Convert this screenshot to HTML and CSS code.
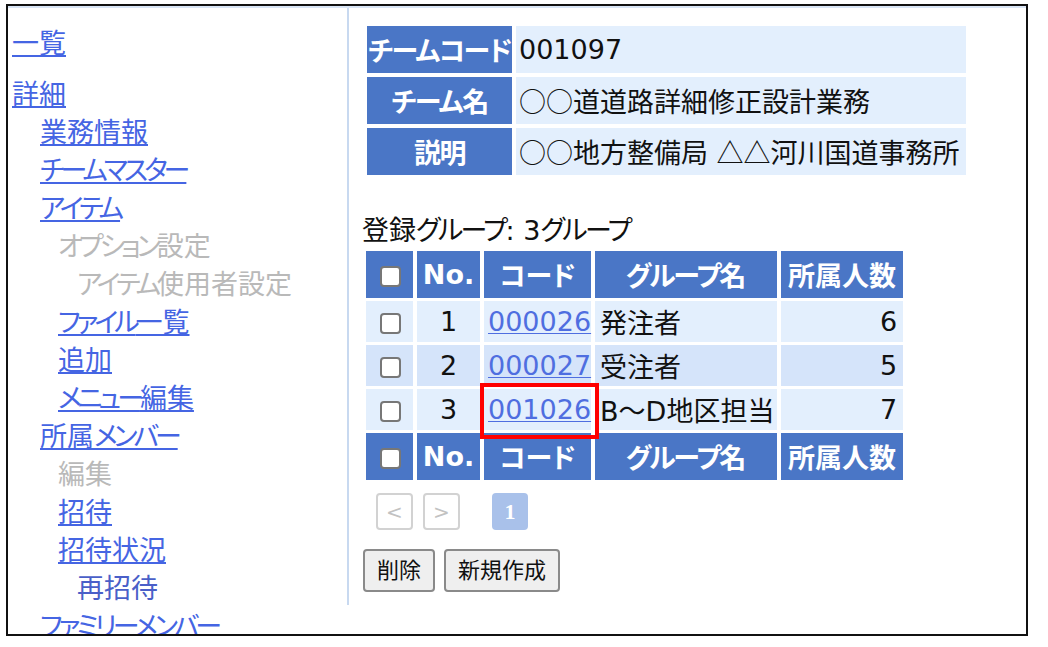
FILE: index.html
```html
<!DOCTYPE html>
<html lang="ja">
<head>
<meta charset="utf-8">
<title>チーム詳細</title>
<link rel="stylesheet" href="styles.css">
</head>
<body>
<div class="frame">
  <div class="inner">
    <nav class="sidebar">
      <div class="nav l0 first"><a href="#">一覧</a></div>
      <div class="nav l0"><a href="#">詳細</a></div>
      <div class="nav l1"><a href="#">業務情報</a></div>
      <div class="nav l1"><a href="#"><span class="kana">チームマスター</span></a></div>
      <div class="nav l1"><a href="#"><span class="kana">アイテム</span></a></div>
      <div class="nav l2 off"><span class="kana">オプション</span>設定</div>
      <div class="nav l3 off"><span class="kana">アイテム</span>使用者設定</div>
      <div class="nav l2"><a href="#"><span class="kana">ファイル</span>一覧</a></div>
      <div class="nav l2"><a href="#">追加</a></div>
      <div class="nav l2"><a href="#"><span class="kana">メニュー</span>編集</a></div>
      <div class="nav l1"><a href="#">所属<span class="kana">メンバー</span></a></div>
      <div class="nav l2 off">編集</div>
      <div class="nav l2"><a href="#">招待</a></div>
      <div class="nav l2"><a href="#">招待状況</a></div>
      <div class="nav l3 plain">再招待</div>
      <div class="nav l1"><a href="#"><span class="kana">ファミリーメンバー</span></a></div>
    </nav>
    <main class="main">
      <table class="info">
        <tr><th class="info-label">チームコード</th><td class="info-value">001097</td></tr>
        <tr><th class="info-label">チーム名</th><td class="info-value"><span class="sym">○○</span>道道路詳細修正設計業務</td></tr>
        <tr><th class="info-label">説明</th><td class="info-value"><span class="sym">○○</span>地方整備局 <span class="sym">△△</span>河川国道事務所</td></tr>
      </table>

      <div class="count">登録<span class="kana-s">グループ</span>: 3<span class="kana-s">グループ</span></div>

      <table class="groups">
        <tr class="head">
          <th class="c-cb"><span class="cb"></span></th>
          <th class="c-no">No.</th>
          <th class="c-code">コード</th>
          <th class="c-name"><span class="kana-h">グループ</span>名</th>
          <th class="c-num">所属人数</th>
        </tr>
        <tr class="odd">
          <td class="c-cb"><span class="cb"></span></td>
          <td class="c-no">1</td>
          <td class="c-code"><a href="#">000026</a></td>
          <td class="c-name">発注者</td>
          <td class="c-num">6</td>
        </tr>
        <tr class="even">
          <td class="c-cb"><span class="cb"></span></td>
          <td class="c-no">2</td>
          <td class="c-code"><a href="#">000027</a></td>
          <td class="c-name">受注者</td>
          <td class="c-num">5</td>
        </tr>
        <tr class="odd">
          <td class="c-cb"><span class="cb"></span></td>
          <td class="c-no">3</td>
          <td class="c-code marked"><a href="#">001026</a><span class="highlight"></span></td>
          <td class="c-name">B～D地区担当</td>
          <td class="c-num">7</td>
        </tr>
        <tr class="head">
          <th class="c-cb"><span class="cb"></span></th>
          <th class="c-no">No.</th>
          <th class="c-code">コード</th>
          <th class="c-name"><span class="kana-h">グループ</span>名</th>
          <th class="c-num">所属人数</th>
        </tr>
      </table>

      <div class="pager">
        <span class="pg-btn">&lt;</span>
        <span class="pg-btn">&gt;</span>
        <span class="pg-cur">1</span>
      </div>

      <div class="actions">
        <button class="btn" type="button">削除</button>
        <button class="btn" type="button">新規作成</button>
      </div>
    </main>
  </div>
</div>
</body>
</html>
```

FILE: styles.css
```css
html, body {
  margin: 0;
  padding: 0;
  background: #fff;
}

body {
  font-family: "DejaVu Sans", "Noto Sans CJK JP", sans-serif;
  font-size: 27px;
  color: #111;
  font-feature-settings: "palt";
}

.frame {
  margin: 4px 0 0 6px;
  width: 1018px;
  height: 628px;
  border: 2px solid #111;
  overflow: hidden;
}

.inner {
  border-top: 2px solid #d9e5f5;
  display: flex;
  align-items: flex-start;
}

/* sidebar */
.sidebar {
  width: 339px;
  flex: none;
  padding-top: 17px;
}

.nav {
  line-height: 38px;
  height: 38px;
  white-space: nowrap;
}

.nav.first {
  margin-bottom: 13px;
}

.nav a {
  color: #4565e3;
  text-decoration: underline;
  text-decoration-thickness: 2px;
  text-underline-offset: 2px;
}

.kana {
  letter-spacing: -4px;
}

.kana-s {
  letter-spacing: -2.5px;
}

.kana-h {
  letter-spacing: -2px;
}

.l0 { padding-left: 4px; }
.l1 { padding-left: 32px; }
.l2 { padding-left: 50px; }
.l3 { padding-left: 69px; }

.off { color: #b9b9b9; }
.plain { color: #4a5fc8; }

/* main */
.main {
  flex: none;
  border-left: 2px solid #c8d9f0;
  padding: 14px 0 13px 13px;
  width: 640px;
}

.info {
  border-collapse: separate;
  border-spacing: 4px;
  margin-left: 1px;
}

.info-label {
  width: 145px;
  height: 47px;
  padding: 0;
  background: #4a76c6;
  color: #fff;
  font-weight: bold;
  text-align: center;
  white-space: nowrap;
  letter-spacing: -1.5px;
}

.info-value {
  width: 447px;
  height: 47px;
  padding: 0 0 0 3px;
  background: #e3effd;
  white-space: nowrap;
}

.sym {
  font-family: "Noto Sans CJK JP", sans-serif;
  font-feature-settings: normal;
}

.count {
  margin-top: 35px;
  line-height: 34px;
  height: 34px;
  white-space: nowrap;
}

.groups {
  border-collapse: separate;
  border-spacing: 4px 3px;
}

.groups th, .groups td {
  padding: 0;
  white-space: nowrap;
}

.groups .head th {
  height: 47px;
  background: #4a76c6;
  color: #fff;
  font-weight: bold;
  text-align: center;
}

.groups td {
  height: 41px;
}

.groups .odd td { background: #e3effd; }
.groups .even td { background: #d5e4fa; }

.c-cb { width: 47px; text-align: center; }
.c-no { width: 63px; text-align: center; }
.c-code { width: 102px; padding-left: 4px !important; }
.c-name { width: 177px; padding-left: 5px !important; }
.c-num { width: 116px; text-align: right; padding-right: 6px !important; }

.groups .head .c-code,
.groups .head .c-name,
.groups .head .c-num {
  padding: 0 !important;
  text-align: center;
}

.c-code a {
  color: #4f6ee0;
  text-decoration: underline;
  text-decoration-thickness: 1px;
  text-underline-offset: 2px;
}

.cb {
  display: inline-block;
  width: 21px;
  height: 21px;
  box-sizing: border-box;
  border: 2px solid #777;
  border-radius: 4px;
  background: #fff;
  vertical-align: middle;
  margin-left: 2px;
}

.marked {
  position: relative;
}

.highlight {
  position: absolute;
  left: -4px;
  top: -6px;
  width: 119px;
  height: 56px;
  box-sizing: border-box;
  border: 4px solid #f00;
}

/* pager */
.pager {
  margin: 10px 0 0 14px;
  display: flex;
  align-items: center;
  height: 37px;
}

.pg-btn {
  width: 37px;
  height: 37px;
  box-sizing: border-box;
  border: 2px solid #d2d2d2;
  border-radius: 4px;
  color: #c2c2c2;
  font-size: 20px;
  display: flex;
  align-items: center;
  justify-content: center;
  margin-right: 10px;
}

.pg-cur {
  margin-left: 22px;
  width: 36px;
  height: 37px;
  border-radius: 4px;
  background: #a9c1ea;
  color: #fff;
  font-family: "Liberation Serif", serif;
  font-weight: bold;
  font-size: 22px;
  display: flex;
  align-items: center;
  justify-content: center;
}

/* actions */
.actions {
  margin: 19px 0 0 1px;
  display: flex;
  gap: 9px;
}

.btn {
  height: 43px;
  box-sizing: border-box;
  border: 2px solid #8a8a8a;
  border-radius: 4px;
  background: #efefef;
  color: #111;
  font-family: "DejaVu Sans", "Noto Sans CJK JP", sans-serif;
  font-size: 22px;
  padding: 0 12px;
  line-height: 1;
}
```
